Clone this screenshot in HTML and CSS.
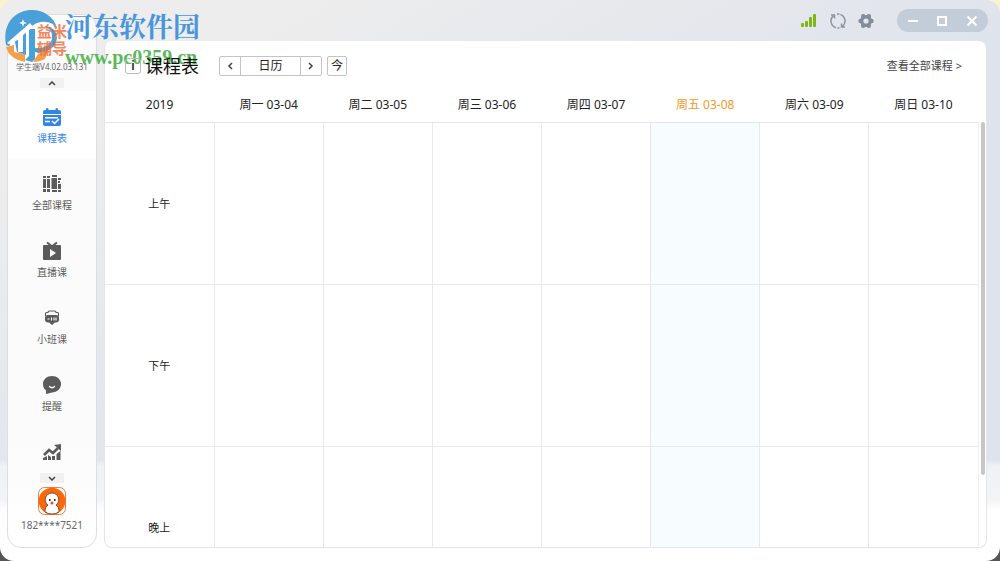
FILE: index.html
```html
<!DOCTYPE html>
<html lang="zh-CN">
<head>
<meta charset="utf-8">
<title>课程表</title>
<link rel="stylesheet" href="styles.css">
</head>
<body>
<div class="window">
  <aside class="sidebar">
    <div class="brand">益米<br>辅导</div>
    <div class="version">学生端V4.02.03.131</div>
    <button class="scroll-btn" aria-label="向上"><svg width="8" height="5" viewBox="0 0 8 5"><path d="M1 4 4 1 7 4"/></svg></button>
    <nav class="nav">
      <a class="nav-item active" href="#">
        <svg width="18" height="18" viewBox="0 0 18 18"><path fill="currentColor" d="M2 2h1V1q0-1 1.200-1T5.500 1v1h7V1q0-1 1.200-1T15 1v1h1a2 2 0 0 1 2 2v2H0V4a2 2 0 0 1 2-2zM0 7h18v9a2 2 0 0 1-2 2H2a2 2 0 0 1-2-2z"/><path fill="none" stroke="#fff" stroke-width="1.500" d="M2 9.700h13M2 13.500h5M9 13l2.500 2.500L16 11"/></svg>
        <span>课程表</span></a>
      <a class="nav-item" href="#">
        <svg width="18" height="18" viewBox="0 0 18 18"><path fill="currentColor" d="M0 1h3v2H0zM0 4h3v9H0zM0 14h3v3H0zM4 1h3v2H4zM4 4h3v9H4zM4 14h3v3H4zM9 0h5v2H9zM8.500 3H14v11H8.500zM9 15h5v2H9zM15 3h3v2h-3zM15 6h2v2h-2zM15 9h3v5h-3zM15 15h3v2h-3z"/></svg>
        <span>全部课程</span></a>
      <a class="nav-item" href="#">
        <svg width="18" height="18" viewBox="0 0 18 18"><path fill="none" stroke="currentColor" stroke-width="2" d="M4 .5l4 3M14 .5l-4 3"/><path fill="currentColor" fill-rule="evenodd" d="M1 3h16a1 1 0 0 1 1 1v13a1 1 0 0 1-1 1H1a1 1 0 0 1-1-1V4a1 1 0 0 1 1-1zm6 4v8l6-4z"/></svg>
        <span>直播课</span></a>
      <a class="nav-item" href="#">
        <svg width="18" height="18" viewBox="0 0 18 18"><path fill="none" stroke="currentColor" stroke-width="1.100" d="M2.500 7V4.500q0-1 1-1H5Q5 2 6.500 2h5Q13 2 13 3.500h1.500q1 0 1 1V7"/><path fill="currentColor" d="M5 6h8q3 0 3 3v1.500q0 3-3 3h-1L9 16l-3-2.500H5q-3 0-3-3V9q0-3 3-3z"/><path stroke="#fff" stroke-width="1.100" d="M4.500 10h2M8.500 8.500v3M11 8.500v3M13 8.500v3"/></svg>
        <span>小班课</span></a>
      <a class="nav-item" href="#">
        <svg width="18" height="18" viewBox="0 0 18 18"><path fill="currentColor" d="M9 0c5 0 9 3.500 9 8s-4 8.500-9 8.500L3 18v-3.500C1 13 0 11 0 8c0-4.500 4-8 9-8z"/><path fill="none" stroke="#fff" stroke-width="1.400" stroke-linecap="round" d="M6.500 10.500q2.500 2.500 5 0"/></svg>
        <span>提醒</span></a>
      <a class="nav-item" href="#" aria-label="学习统计">
        <svg width="18" height="18" viewBox="0 0 18 18"><path fill="none" stroke="currentColor" stroke-width="2.600" d="M1 12l5-5 4 3 5-5"/><path fill="currentColor" d="M11 2l7-1v7zM0 15l4-2v4H0zM5 12l3 2v3H5zM9 13h3v4H9zM13.500 11l4-3v9h-4z"/></svg></a>
    </nav>
    <button class="scroll-btn" aria-label="向下"><svg width="8" height="5" viewBox="0 0 8 5"><path d="M1 1 4 4 7 1"/></svg></button>
    <div class="user">
      <svg width="28" height="28" viewBox="0 0 28 28"><rect x=".5" y=".5" width="27" height="27" rx="6" fill="#fff" stroke="#f47a35"/><circle cx="14" cy="14" r="13.300" fill="#f7690c"/><path fill="#fff" stroke="#6b3414" stroke-width=".8" d="M7 25c0-4 1-6 3-7-5-3-3-12 4-12s9 9 4 12c2 1 3 3 3 7q-7 4-14 0z"/><path fill="#222" d="M11 12h1.500v2H11zM16 12h1.500v2H16z"/><circle cx="14" cy="16" r="1.500" fill="#e54a2b"/></svg>
      <span>182****7521</span>
    </div>
  </aside>

  <div class="content">
    <header class="titlebar">
      <svg width="15" height="14" viewBox="0 0 15 14" fill="#7db715"><rect y="9" width="3" height="4" rx="1"/><rect x="4" y="7" width="3" height="6" rx="1"/><rect x="8" y="3" width="3" height="10" rx="1"/><rect x="12" width="3" height="13" rx="1"/></svg>
      <button class="tool" aria-label="刷新"><svg width="16" height="16" viewBox="0 0 16 16" fill="none" stroke="#8d96a3" stroke-width="1.500"><path d="M6 14.700A7 7 0 0 1 3.500 2.600M1 2h3.500v3.500M7 1q1.500-.2 2.500.2M10.500 1.500a7 7 0 0 1 2 11.900M15 14h-3.500v-3.500M9.500 14.800q-1 .2-2 .1"/></svg></button>
      <button class="tool" aria-label="设置"><svg width="16" height="16" viewBox="0 0 16 16"><circle cx="8" cy="8" r="4.300" fill="none" stroke="#838d9c" stroke-width="3.400"/><path stroke="#838d9c" stroke-width="4.500" stroke-linecap="round" d="M5.200 3.200v0M10.800 3.200v0M2.600 8v0M13.400 8v0M5.200 12.800v0M10.800 12.800v0"/></svg></button>
      <div class="controls">
        <button aria-label="最小化"><svg width="12" height="12" viewBox="0 0 12 12"><path d="M1 6h10" stroke-width="3"/></svg></button>
        <button aria-label="最大化"><svg width="12" height="12" viewBox="0 0 12 12"><path d="M2 2h8v8H2z"/></svg></button>
        <button aria-label="关闭"><svg width="12" height="12" viewBox="0 0 12 12"><path d="M1.500 1.500l9 9M10.500 1.500l-9 9"/></svg></button>
      </div>
    </header>
    <main class="panel">
      <div class="toolbar">
        <button class="info" aria-label="说明">i</button>
        <h1>课程表</h1>
        <div class="pager">
          <button aria-label="上一周"><svg width="6" height="8" viewBox="0 0 6 8"><path d="M5 1 2 4 5 7"/></svg></button>
          <button class="date">日历</button>
          <button aria-label="下一周"><svg width="6" height="8" viewBox="0 0 6 8"><path d="M1 1 4 4 1 7"/></svg></button>
        </div>
        <button class="today">今</button>
        <a class="all" href="#">查看全部课程 &gt;</a>
      </div>
      <div class="schedule">
        <div class="grid">
          <table>
            <thead><tr><th>2019</th><th>周一 03-04</th><th>周二 03-05</th><th>周三 03-06</th><th>周四 03-07</th><th class="now">周五 03-08</th><th>周六 03-09</th><th>周日 03-10</th></tr></thead>
            <tbody>
              <tr><th>上午</th><td></td><td></td><td></td><td></td><td class="now"></td><td></td><td></td></tr>
              <tr><th>下午</th><td></td><td></td><td></td><td></td><td class="now"></td><td></td><td></td></tr>
              <tr><th>晚上</th><td></td><td></td><td></td><td></td><td class="now"></td><td></td><td></td></tr>
            </tbody>
          </table>
        </div>
        <div class="track"><div class="thumb"></div></div>
      </div>
    </main>
  </div>

  <div class="watermark">
    <svg width="53" height="53" viewBox="0 0 53 53">
      <circle cx="26.500" cy="26.500" r="26" fill="#fff" fill-opacity=".8"/>
      <path fill="#4aa0d9" d="M1 35C-3 14 10 0 27 0c12 0 22 7 25 18-4-5-9-7-16-6-6 1-10 4-13 8L4 36z"/>
      <path fill="#4aa0d9" d="M9 27l12-9v27l-9-3z"/>
      <path fill="#4aa0d9" d="M24 19h6v30l-3 3-7-2 4-4z"/>
      <path fill="#4aa0d9" d="M30 38c8 1 15-2 17-9 1-6-2-11-8-13 8 0 13 5 13 12-1 10-11 16-22 14z"/>
      <path fill="#f3a04b" d="M1 37l8-2v7l11 2v8C10 50 3 45 1 37zM28 52l5-8 10-3-3 8c-4 2-8 3-12 3z"/>
      <path fill="#fff" d="M2 33L25 13l3 4L6 35zM12 27l6-4v19h-5V30h-3z"/>
      <path fill="#fff" d="M18 9l1 3 3 1-3 1-1 3-1-3-3-1 3-1z"/>
    </svg>
    <div class="watermark-text"><span class="site">河东软件园</span><span class="url">www.pc0359.cn</span></div>
  </div>
</div>
</body>
</html>
```
FILE: styles.css
```css
* { box-sizing: border-box; }
body {
  margin: 0;
  background: linear-gradient(#faf3cf 50%, #555 50%);
  color: #222;
  font: 12px/16px "Noto Sans", "Noto Sans CJK SC", sans-serif;
}
button { padding: 0; border: 0; background: none; color: inherit; font: inherit; }
a { color: inherit; text-decoration: none; }
svg { display: block; flex: none; }

.window {
  position: relative;
  display: flex;
  gap: 7px;
  height: 100vh;
  padding: 0 13px 13px 7px;
  overflow: hidden;
  border-radius: 14px;
  background:
    linear-gradient(transparent 82%, #eff1f5 83%, #f3f4f7 89%, #fff 91%),
    linear-gradient(150deg, #ededed 15%, #dfe3ec 55%);
}

.sidebar {
  display: flex;
  flex: 0 0 90px;
  flex-direction: column;
  align-items: center;
  margin-top: 14px;
  border: 1px solid #dcdee1;
  border-radius: 14px;
  background: linear-gradient(#fbfbfb 80%, #fff);
}
.brand {
  position: relative;
  z-index: 2;
  margin-top: 8px;
  color: #f26a35;
  font-size: 15px;
  font-weight: 700;
  line-height: 17px;
  opacity: .8;
}
.version {
  position: relative;
  z-index: 2;
  margin-top: 1px;
  color: #666;
  font-size: 8px;
  line-height: 18px;
  white-space: nowrap;
}
.scroll-btn {
  display: flex;
  flex: none;
  align-items: center;
  justify-content: center;
  width: 24px;
  height: 10px;
  margin: 2px 0 3px;
  background: #f1f1f2;
}
.scroll-btn path, .pager path { fill: none; stroke: #444; stroke-width: 1.5; }
.nav { flex: 1; min-height: 0; width: 100%; overflow: hidden; }
.nav-item {
  display: flex;
  flex-direction: column;
  align-items: center;
  gap: 4px;
  height: 67px;
  padding-top: 17px;
  color: #5b5b5b;
  font-size: 10px;
}
.nav-item.active { background: #fff; color: #3484e8; }
.user {
  display: flex;
  flex-direction: column;
  align-items: center;
  gap: 2px;
  padding: 1px 0 14px;
  color: #666;
  font-size: 10px;
}

.content { display: flex; flex: 1; flex-direction: column; min-width: 0; }
.titlebar {
  display: flex;
  flex: 0 0 41px;
  align-items: center;
  justify-content: flex-end;
  gap: 12px;
  margin-right: -1px;
}
.titlebar > svg { margin-right: 2px; }
.controls {
  display: flex;
  align-items: center;
  justify-content: space-around;
  width: 91px;
  height: 23px;
  margin-left: 11px;
  padding: 0 1px;
  border-radius: 12px;
  background: #c3ccd9;
}
.controls path { fill: none; stroke: #fff; stroke-width: 2; }

.panel {
  display: flex;
  flex: 1;
  flex-direction: column;
  min-height: 0;
  border: 1px solid #e3e5e8;
  border-top: 0;
  border-radius: 8px;
  background: #fff;
  overflow: hidden;
}
.toolbar { display: flex; align-items: center; flex: 0 0 45px; padding: 5px 24px 0 20px; }
.info, h1 { position: relative; z-index: 2; }
.info {
  width: 16px;
  height: 16px;
  border: 1px solid #bbb;
  border-radius: 3px;
  line-height: 14px;
  font-weight: 600;
}
h1 { margin: 0 20px 0 4px; color: #111; font-size: 18px; font-weight: 400; line-height: 24px; }
.pager { display: flex; height: 20px; border: 1px solid #c4c4c4; border-radius: 2px; }
.pager button { display: flex; align-items: center; justify-content: center; width: 20px; }
.pager .date { width: 61px; border: solid #c4c4c4; border-width: 0 1px; }
.today { width: 20px; height: 20px; margin-left: 5px; border: 1px solid #c4c4c4; border-radius: 2px; }
.all { margin-left: auto; color: #444; font-size: 11px; }

.schedule { display: flex; flex: 1; min-height: 0; overflow: hidden; }
.grid { flex: 1; min-width: 0; }
table { width: 100%; table-layout: fixed; border-collapse: collapse; }
th { padding: 2px 0 0; font-size: 12px; font-weight: 400; }
thead th { height: 36px; border-bottom: 1px solid #e6e6e6; }
tbody th { font-size: 11px; }
tbody th, td { height: 162px; border: solid #e9e9eb; border-width: 0 1px 1px 0; }
tr > :last-child { border-right: 0; }
td { padding: 0; }
td.now { background: #f6fcff; }
thead .now { color: #f39a1e; }
.track { flex: 0 0 8px; margin-top: 36px; padding: 0 1px 0 2px; border-left: 1px solid #eee; }
.thumb { height: 83%; border-radius: 2px; background: #c6c6c6; }

.watermark { position: absolute; top: 10px; left: 5px; display: flex; gap: 7px; pointer-events: none; }
.watermark-text { display: flex; flex-direction: column; }
.site {
  color: #4a96dc;
  font: 700 27px/36px "Liberation Serif", "Noto Serif CJK SC", "Noto Sans CJK SC", serif;
}
.url { color: #5cb85c; font: 700 20px/22px "Liberation Serif", serif; }
```
